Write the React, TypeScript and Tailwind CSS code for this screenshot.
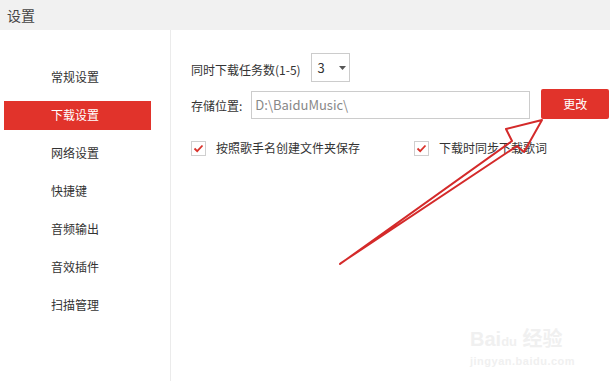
const menu = ["常规设置", "下载设置", "网络设置", "快捷键", "音频输出", "音效插件", "扫描管理"];

const CheckBox = ({ label }: { label: string }) => (
  <label className="flex items-center">
    <span className="flex h-[15px] w-[15px] items-center justify-center border border-[#cfcfcf] bg-white">
      <svg width="11" height="9" viewBox="0 0 11 9">
        <path d="M1.5 4.5 L4.2 7.2 L9.5 1.5" fill="none" stroke="#d9322b" strokeWidth="1.8" />
      </svg>
    </span>
    <span className="ml-[10px]">{label}</span>
  </label>
);

const App = () => {
  return (
    <div
      className="relative h-[381px] w-[610px] overflow-hidden bg-white text-[12px] text-[#333]"
      style={{ fontFamily: '"Microsoft YaHei", "Noto Sans CJK SC", sans-serif' }}
    >
      <div className="flex h-[30px] items-center bg-[#f1f1f1] px-[7px] text-[14px] text-[#444]">设置</div>

      <div className="flex h-[351px]">
        <aside className="w-[171px] border-r border-[#ebebeb] pl-[4px] pt-[28px]">
          {menu.map((item) => (
            <div key={item} className="flex h-[38px] items-center">
              <div
                className={
                  item === "下载设置"
                    ? "flex h-[29px] w-[147px] items-center bg-[#e1332b] pl-[47px] text-white"
                    : "flex h-[29px] w-[147px] items-center pl-[47px]"
                }
              >
                {item}
              </div>
            </div>
          ))}
        </aside>

        <main className="flex-1 pl-[20px] pt-[23px]">
          <div className="flex h-[29px] items-center">
            <span className="mt-[4px]">同时下载任务数(1-5)</span>
            <div className="ml-[10px] flex h-[29px] w-[39px] items-center border border-[#cccccc] pl-[6px] text-[13px]">
              <span>3</span>
              <svg className="ml-[14px]" width="7" height="4" viewBox="0 0 7 4">
                <path d="M0 0 H7 L3.5 4 Z" fill="#555" />
              </svg>
            </div>
          </div>

          <div className="mt-[7px] flex h-[30px] items-center">
            <span className="mt-[4px]">存储位置:</span>
            <div className="ml-[9px] mt-[2px] flex h-[28px] w-[279px] items-center border border-[#cccccc] pl-[3px] text-[13px] text-[#888]">
              D:\BaiduMusic\
            </div>
            <button className="ml-[11px] flex h-[30px] w-[68px] shrink-0 items-center justify-center rounded-[2px] bg-[#e1332b] text-[12px] text-white">
              更改
            </button>
          </div>

          <div className="mt-[20px] flex items-center">
            <CheckBox label="按照歌手名创建文件夹保存" />
            <div className="ml-[54px]">
              <CheckBox label="下载时同步下载歌词" />
            </div>
          </div>
        </main>
      </div>

      <svg className="pointer-events-none absolute left-0 top-0" width="610" height="381" viewBox="0 0 610 381">
        <path
          d="M340 264 L512 141 L506 129 L542 120 L524 152 L517 146 L341 263 Z"
          fill="none"
          stroke="#d42a2a"
          strokeWidth="2"
          strokeLinejoin="round"
        />
      </svg>

      <div className="pointer-events-none absolute left-[470px] top-[327px] text-[#f0f0f0]">
        <div className="text-[20px] font-bold leading-[22px]" style={{ fontFamily: '"Liberation Sans", sans-serif' }}>
          Bai<span className="text-[13px]">du</span> <span style={{ fontFamily: '"Noto Sans CJK SC", sans-serif' }}>经验</span>
        </div>
        <div className="text-[11px] font-bold tracking-[0.5px]" style={{ fontFamily: '"Liberation Sans", sans-serif' }}>jingyan.baidu.com</div>
      </div>
    </div>
  );
};

export default App;
